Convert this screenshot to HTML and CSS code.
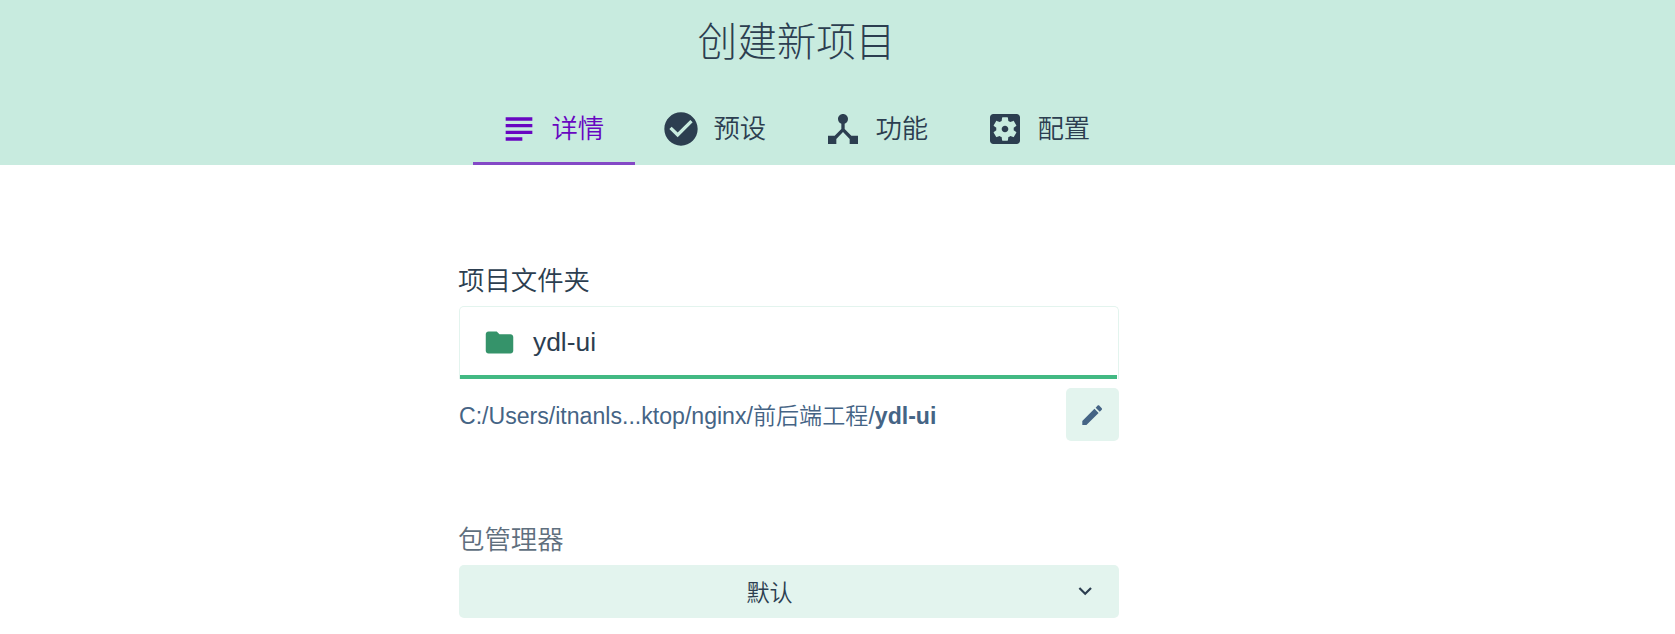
FILE: index.html
```html
<!DOCTYPE html>
<html lang="zh-CN">
<head>
<meta charset="utf-8">
<title>创建新项目</title>
<link rel="stylesheet" href="styles.css">
</head>
<body>
<header class="header">
  <h1 class="title">创建新项目</h1>
  <nav class="tabs">
    <a class="tab active"><svg class="icon" viewBox="0 0 24 24"><path d="M14 17H4v2h10v-2zm6-8H4v2h16V9zM4 15h16v-2H4v2zM4 5v2h16V5H4z"/></svg><span>详情</span></a>
    <a class="tab"><svg class="icon" viewBox="0 0 24 24"><path d="M12 2C6.48 2 2 6.48 2 12s4.48 10 10 10 10-4.48 10-10S17.52 2 12 2zm-2 15l-5-5 1.41-1.41L10 14.17l7.59-7.59L19 8l-9 9z"/></svg><span>预设</span></a>
    <a class="tab"><svg class="icon" viewBox="0 0 24 24"><path d="M17 16l-4-4V8.82C14.16 8.4 15 7.3 15 6c0-1.66-1.34-3-3-3S9 4.34 9 6c0 1.3.84 2.4 2 2.82V12l-4 4H3v5h5v-3.05l4-4.2 4 4.2V21h5v-5h-4z"/></svg><span>功能</span></a>
    <a class="tab"><svg class="icon" viewBox="0 0 24 24"><path d="M12 10c-1.1 0-2 .9-2 2s.9 2 2 2 2-.9 2-2-.9-2-2-2zm7-7H5c-1.11 0-2 .9-2 2v14c0 1.1.89 2 2 2h14c1.11 0 2-.9 2-2V5c0-1.1-.89-2-2-2zm-1.75 9c0 .23-.02.46-.05.68l1.48 1.16c.13.11.17.3.08.45l-1.4 2.42c-.09.15-.27.21-.43.15l-1.74-.7c-.36.28-.76.51-1.18.69l-.26 1.85c-.03.17-.18.3-.35.3h-2.8c-.17 0-.32-.13-.35-.29l-.26-1.85c-.43-.18-.82-.41-1.18-.69l-1.74.7c-.16.06-.34 0-.43-.15l-1.4-2.42c-.09-.15-.05-.34.08-.45l1.48-1.16c-.03-.23-.05-.46-.05-.69s.02-.46.05-.68l-1.48-1.16c-.13-.11-.17-.3-.08-.45l1.4-2.42c.09-.15.27-.21.43-.15l1.74.7c.36-.28.76-.51 1.18-.69l.26-1.85c.03-.17.18-.3.35-.3h2.8c.17 0 .32.13.35.29l.26 1.85c.43.18.82.41 1.18.69l1.74-.7c.16-.06.34 0 .43.15l1.4 2.42c.09.15.05.34-.08.45l-1.48 1.16c.03.23.05.46.05.69z"/></svg><span>配置</span></a>
  </nav>
</header>
<main class="form">
  <label class="label">项目文件夹</label>
  <div class="input">
    <div class="field">
      <svg class="folder" viewBox="0 0 24 24"><path d="M10 4H4c-1.1 0-1.99.9-1.99 2L2 18c0 1.1.9 2 2 2h16c1.1 0 2-.9 2-2V8c0-1.1-.9-2-2-2h-8l-2-2z"/></svg>
      <span>ydl-ui</span>
    </div>
    <div class="underline"></div>
  </div>
  <div class="location">
    <div class="path">C:/Users/itnanls...ktop/nginx/前后端工程/<b>ydl-ui</b></div>
    <button class="edit" aria-label="编辑"><svg class="small-icon" viewBox="0 0 24 24"><path d="M3 17.25V21h3.75L17.81 9.94l-3.75-3.75L3 17.25zM20.71 7.04c.39-.39.39-1.02 0-1.41l-2.34-2.34c-.39-.39-1.02-.39-1.41 0l-1.83 1.83 3.75 3.75 1.83-1.83z"/></svg></button>
  </div>
  <label class="label muted">包管理器</label>
  <div class="select">
    <span class="value">默认</span>
    <svg class="small-icon" viewBox="0 0 24 24"><path d="M7.41 8.34L12 12.92l4.59-4.58L18 9.75l-6 6-6-6z"/></svg>
  </div>
</main>
</body>
</html>
```
FILE: styles.css
```css
* {
  box-sizing: border-box;
}

body {
  margin: 0;
  background: #fff;
  color: #2c3e50;
  font-family: "Liberation Sans", "Noto Sans CJK SC", sans-serif;
  font-size: 26.4px;
  font-weight: 350;
}

.header {
  height: 165px;
  background: #c8ebdf;
  display: flex;
  flex-direction: column;
  align-items: center;
}

.title {
  margin: 0;
  padding-right: 82px;
  height: 93px;
  font-size: 39.6px;
  font-weight: 300;
  line-height: 84px;
}

.tabs {
  display: flex;
  height: 72px;
  padding-right: 81px;
}

.tab {
  width: 162px;
  height: 72px;
  padding-left: 26.4px;
  display: flex;
  align-items: center;
  gap: 12px;
}

.tab span {
  line-height: 40px;
}

.tab.active {
  color: #6806c1;
  box-shadow: inset 0 -3px #8449c6;
}

.icon {
  width: 40px;
  height: 40px;
  fill: currentColor;
}

.form {
  width: 660px;
  margin: 0 0 0 459px;
  padding-top: 94px;
}

.label {
  display: block;
  height: 47px;
  margin-left: -1px;
  line-height: 44px;
}

.label.muted {
  margin-top: 77px;
  color: #5f6f7e;
}

.input {
  height: 73px;
  border: 1px solid #e3f4ee;
  border-bottom: 0;
  border-radius: 5px 5px 0 0;
}

.field {
  height: 68px;
  padding: 3px 0 0 23px;
  display: flex;
  align-items: center;
  gap: 17px;
}

.underline {
  height: 4px;
  margin-right: 1px;
  background: #42b983;
}

.folder {
  width: 33px;
  height: 33px;
  fill: #35936a;
}

.location {
  margin-top: 9px;
  display: flex;
  justify-content: space-between;
  align-items: center;
  color: #456485;
  font-size: 23.1px;
}

.path {
  padding-bottom: 2px;
  white-space: nowrap;
}

.path b {
  font-weight: 700;
}

.edit {
  width: 53px;
  height: 53px;
  padding: 1px 0 0;
  border: 0;
  border-radius: 5px;
  background: #e3f4ee;
  color: inherit;
  display: flex;
  align-items: center;
  justify-content: center;
}

.small-icon {
  width: 26.4px;
  height: 26.4px;
  fill: currentColor;
}

.select {
  height: 53px;
  border-radius: 5px;
  background: #e3f4ee;
  padding: 0 20.5px 0 8px;
  display: flex;
  align-items: center;
  font-size: 23.1px;
}

.value {
  flex: 1;
  padding-bottom: 2px;
  text-align: center;
}
```
